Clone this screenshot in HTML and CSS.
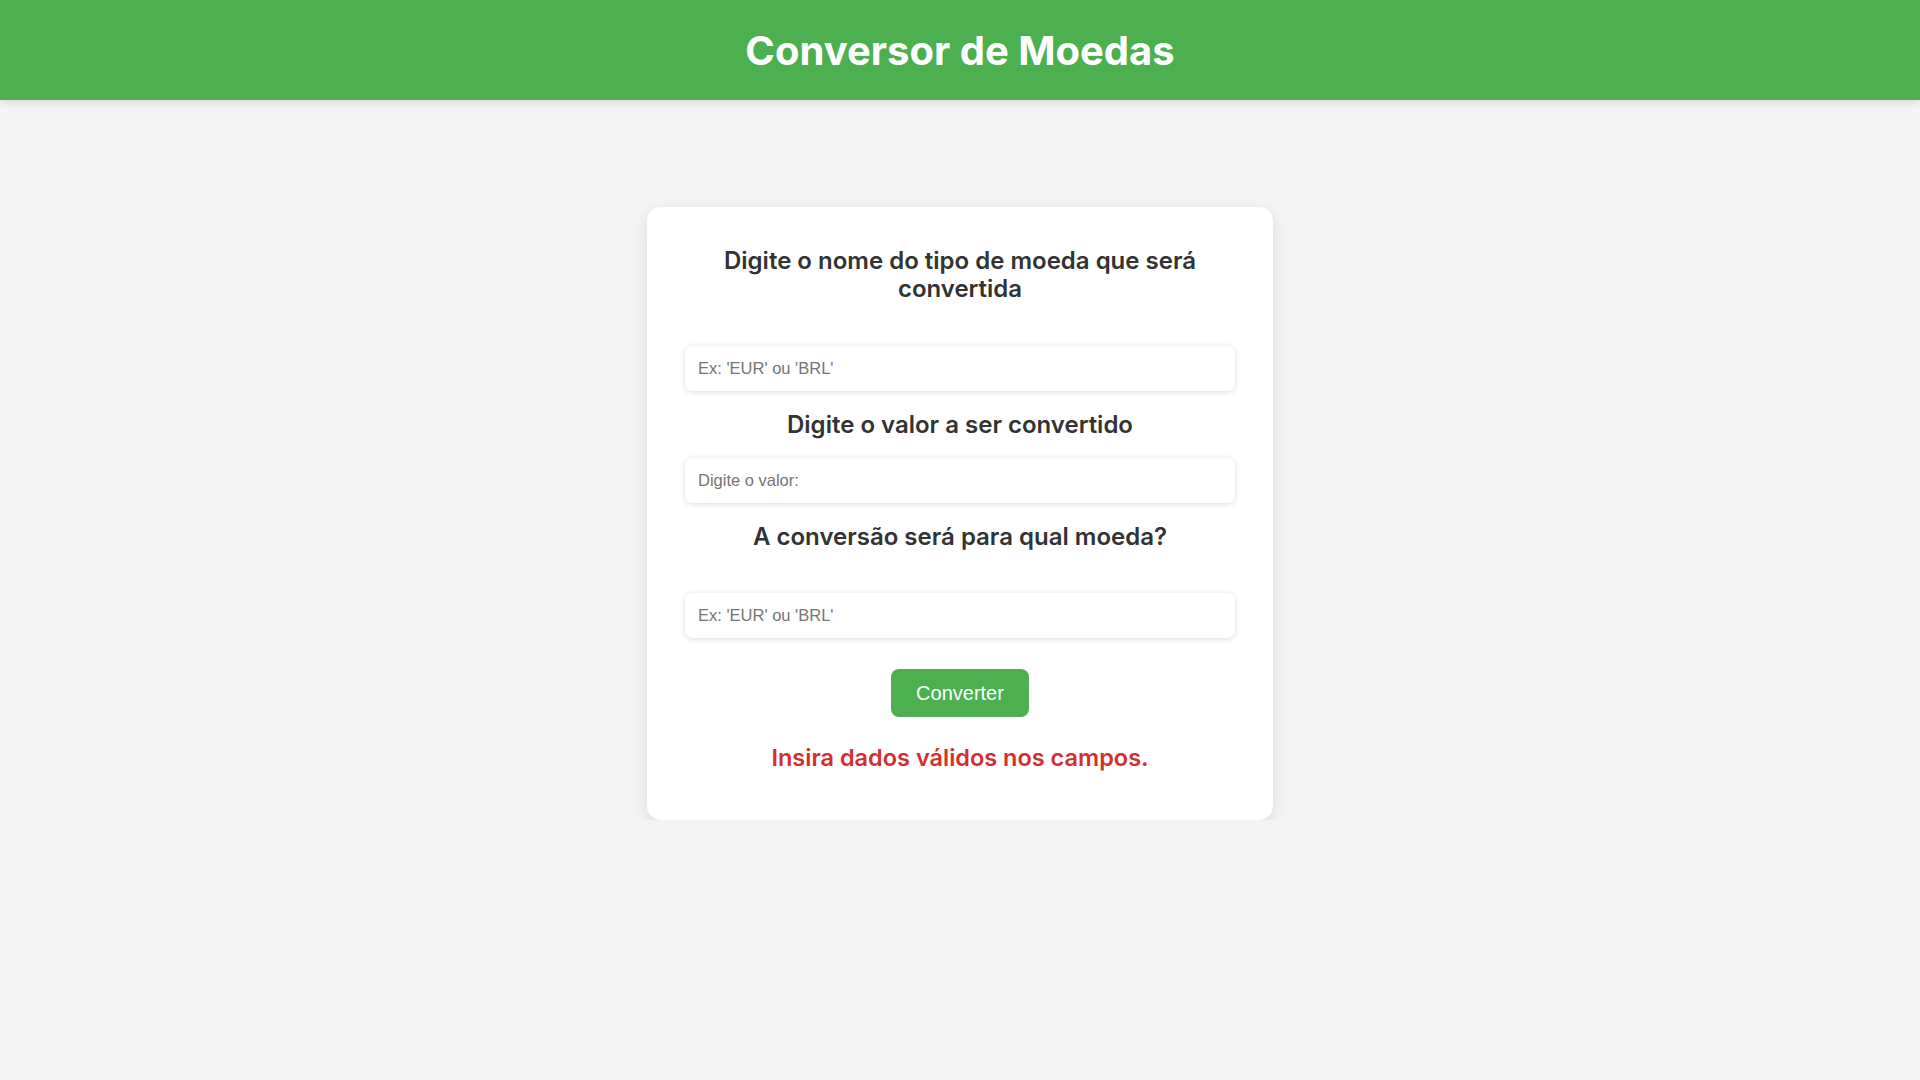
FILE: index.html
```html
<!DOCTYPE html>
<html lang="pt-BR">
<head>
<meta charset="UTF-8">
<title>Conversor de Moedas</title>
<link rel="stylesheet" href="styles.css">
</head>
<body>
<header class="topbar">
  <h1 class="topbar-title">Conversor de Moedas</h1>
</header>
<main class="page">
  <section class="card">
    <h2 class="card-heading heading-first">Digite o nome do tipo de moeda que será convertida</h2>
    <input class="field" type="text" placeholder="Ex: 'EUR' ou 'BRL'">
    <h2 class="card-heading heading-mid">Digite o valor a ser convertido</h2>
    <input class="field" type="text" placeholder="Digite o valor:">
    <h2 class="card-heading heading-last">A conversão será para qual moeda?</h2>
    <input class="field" type="text" placeholder="Ex: 'EUR' ou 'BRL'">
    <div class="actions">
      <button class="btn-convert" type="button">Converter</button>
    </div>
    <p class="error-msg">Insira dados válidos nos campos.</p>
  </section>
</main>
</body>
</html>
```
FILE: styles.css
```css
* { box-sizing: border-box; }

body {
  margin: 0;
  background: #f4f4f4;
  font-family: Inter, "Liberation Sans", Arial, sans-serif;
  color: #333;
}

.topbar {
  height: 100px;
  background: #4caf50;
  display: flex;
  align-items: center;
  justify-content: center;
  box-shadow: 0 2px 8px rgba(0, 0, 0, 0.12);
}

.topbar-title {
  margin: 0;
  color: #fff;
  font-size: 40px;
  font-weight: 700;
}

.page {
  padding-top: 107px;
}

.card {
  width: 626px;
  margin: 0 auto;
  background: #fff;
  border-radius: 14px;
  box-shadow: 0 4px 14px rgba(0, 0, 0, 0.1);
  padding: 40px 38px 48px;
  display: flex;
  flex-direction: column;
}

.card-heading {
  margin: 0;
  text-align: center;
  font-size: 24px;
  line-height: 28px;
  font-weight: 600;
  color: #333;
}

.heading-first { margin-bottom: 43px; }
.heading-mid { margin: 20px 0 19px; }
.heading-last { margin: 20px 0 42px; }

.field {
  width: 100%;
  height: 45px;
  border: none;
  border-radius: 8px;
  padding: 0 13px;
  font-family: "Liberation Sans", Arial, sans-serif;
  font-size: 16.5px;
  color: #333;
  background: #fff;
  box-shadow: 0 1px 6px rgba(0, 0, 0, 0.14);
  outline: none;
}

.field::placeholder { color: #757575; }

.actions {
  display: flex;
  justify-content: center;
  margin-top: 31px;
}

.btn-convert {
  width: 138px;
  height: 48px;
  border: none;
  border-radius: 8px;
  background: #4caf50;
  color: #fff;
  font-family: "Liberation Sans", Arial, sans-serif;
  font-size: 20px;
  cursor: pointer;
}

.error-msg {
  margin: 27px 0 0;
  text-align: center;
  color: #d32f2f;
  font-size: 23.5px;
  line-height: 28px;
  font-weight: 600;
}
```
